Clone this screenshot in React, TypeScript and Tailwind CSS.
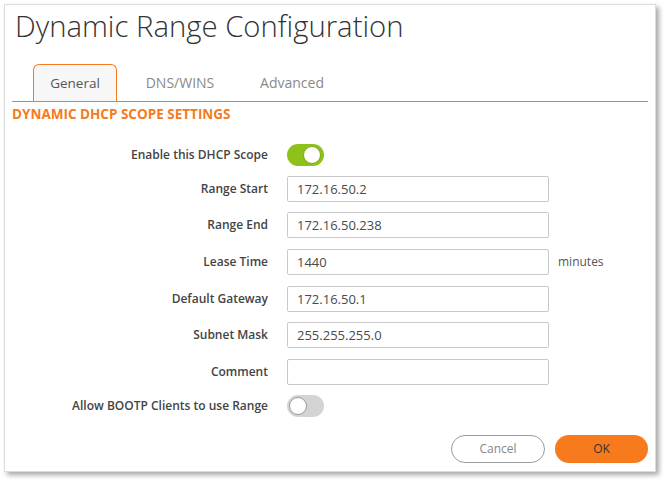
import React from 'react'

const font = { fontFamily: '"Open Sans", "Noto Sans", Arial, sans-serif' }

function Toggle({ on }: { on: boolean }) {
  return (
    <div
      className={`relative h-[22px] w-[37px] rounded-full ${on ? 'bg-[#8dc21a]' : 'bg-[#d4d4d4]'}`}
    >
      <div
        className={`absolute top-[2px] h-[18px] w-[18px] rounded-full bg-white border ${
          on ? 'right-[3px] border-[#7aa818]' : 'left-[2px] border-[#9a9a9a]'
        }`}
      />
    </div>
  )
}

function Field({ label, value, suffix }: { label: string; value?: string; suffix?: string }) {
  return (
    <div className="flex items-center h-[26px]">
      <label className="w-[256px] text-right text-[12px] font-semibold text-[#444]">{label}</label>
      <input
        readOnly
        value={value ?? ''}
        className="ml-[19px] h-[26px] w-[262px] rounded-[2px] border border-[#c9c9c9] bg-white px-[9px] text-[13px] text-[#4a4a4a] outline-none"
        style={font}
      />
      {suffix && <span className="ml-[9px] text-[12px] text-[#555]">{suffix}</span>}
    </div>
  )
}

function ToggleRow({ label, on }: { label: string; on: boolean }) {
  return (
    <div className="flex items-center h-[21px]">
      <label className="w-[256px] text-right text-[12px] font-semibold text-[#444]">{label}</label>
      <div className="ml-[19px]">
        <Toggle on={on} />
      </div>
    </div>
  )
}

export default function App() {
  return (
    <div className="h-[481px] w-[664px] bg-white p-[4px]" style={font}>
      <div className="h-[468px] w-[652px] border border-[#dcdcdc] bg-white shadow-[3px_3px_5px_rgba(0,0,0,0.35)] px-[7px]">
        <h1 className="pl-[3px] pt-[3px] text-[29.3px] font-light leading-[36px] text-[#333]">
          Dynamic Range Configuration
        </h1>

        {/* Tabs */}
        <div className="mt-[20px] flex h-[38px] items-end border-b border-[#f47b20]">
          <div className="ml-[21px] flex h-[37px] w-[84px] items-center justify-center rounded-t-[6px] border border-b-0 border-[#f47b20] bg-[#f7f7f7] text-[13.5px] text-[#555]">
            General
          </div>
          <div className="flex h-[37px] w-[126px] items-center justify-center text-[14px] text-[#8a8a8a]">
            DNS/WINS
          </div>
          <div className="flex h-[37px] w-[98px] items-center justify-center text-[14px] text-[#8a8a8a]">
            Advanced
          </div>
        </div>

        <h2 className="mt-[4px] text-[13.5px] font-bold leading-[16px] text-[#f47b20]">
          DYNAMIC DHCP SCOPE SETTINGS
        </h2>

        <div className="mt-[22px] flex flex-col gap-[10.7px]">
          <ToggleRow label="Enable this DHCP Scope" on />
          <Field label="Range Start" value="172.16.50.2" />
          <Field label="Range End" value="172.16.50.238" />
          <Field label="Lease Time" value="1440" suffix="minutes" />
          <Field label="Default Gateway" value="172.16.50.1" />
          <Field label="Subnet Mask" value="255.255.255.0" />
          <Field label="Comment" />
          <ToggleRow label="Allow BOOTP Clients to use Range" on={false} />
        </div>

        <div className="mt-[18px] flex justify-end gap-[10px]">
          <button className="h-[28px] w-[94px] rounded-full border border-[#9a9a9a] bg-white text-[12px] text-[#888]">
            Cancel
          </button>
          <button className="h-[28px] w-[93px] rounded-full bg-[#f77b1c] text-[12px] text-[#333]">
            OK
          </button>
        </div>
      </div>
    </div>
  )
}
